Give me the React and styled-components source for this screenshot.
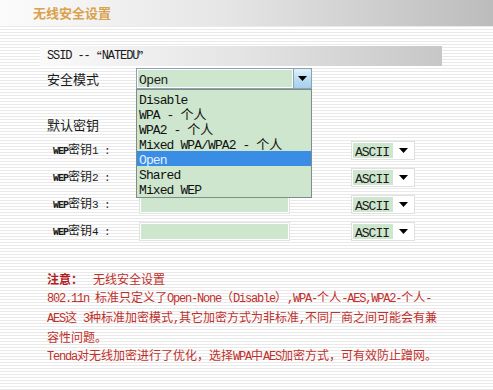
import React from "react";
import styled, { createGlobalStyle } from "styled-components";

const Global = createGlobalStyle`
  html, body { margin: 0; padding: 0; background: #fff; }
  body { font-family: "Noto Sans CJK SC", "Liberation Sans", sans-serif; }
`;

const Page = styled.div`
  width: 493px;
  height: 390px;
  overflow: hidden;
  background: repeating-linear-gradient(
    to bottom,
    #ffffff 0px,
    #ffffff 2px,
    #e9e9e9 2px,
    #e9e9e9 3px
  );
  color: #1a1a1a;
`;

const Header = styled.div`
  height: 26px;
  display: flex;
  align-items: center;
  padding-left: 33px;
  background: linear-gradient(to right, #fbfbfb 0%, #e6e6e6 45%, #bcbcbc 100%);
`;

const Title = styled.h1`
  margin: 0;
  font-size: 13px;
  font-weight: 700;
  line-height: 18px;
  color: #d9a24c;
`;

const Content = styled.div`
  padding: 20px 0 0 40px;
`;

const SsidBar = styled.div`
  width: 395px;
  height: 20px;
  padding-left: 7px;
  display: flex;
  align-items: center;
  font-size: 12px;
  background: linear-gradient(to right, #fafafa 0%, #e4e4e4 50%, #c7c7c7 100%);
`;

const Row = styled.div`
  display: flex;
  align-items: center;
  height: ${(p) => p.$h}px;
  margin-top: ${(p) => p.$mt || 0}px;
`;

const Label = styled.div`
  width: ${(p) => p.$w}px;
  padding-left: ${(p) => p.$pl}px;
  box-sizing: border-box;
  font-size: ${(p) => p.$fs || 13}px;
  line-height: 18px;
  white-space: nowrap;
  flex-shrink: 0;
`;

const Lat = styled.span`
  font-family: "Liberation Mono", monospace;
  font-size: ${(p) => p.$size}px;
  letter-spacing: ${(p) => p.$ls}px;
  font-weight: ${(p) => (p.$bold ? 700 : "inherit")};
`;

function Mixed({ text, size = 12, ls = -1.2, bold = false }) {
  const parts = text.split(/([\x20-\x7E]+)/).filter((s) => s.length);
  return parts.map((p, i) =>
    /^[\x20-\x7E]+$/.test(p) ? (
      <Lat key={i} $size={size} $ls={ls} $bold={bold}>
        {p}
      </Lat>
    ) : (
      <React.Fragment key={i}>{p}</React.Fragment>
    )
  );
}

const SelectWrap = styled.div`
  position: relative;
  width: 176px;
  height: 21px;
  box-sizing: border-box;
  border: 1px solid #8aa3b5;
  background: #fff;
  display: flex;
  padding: 1px 0 1px 1px;
`;

const SelectField = styled.div`
  flex: 1;
  background: #cde6cd;
  font-size: 13px;
  line-height: 17px;
  padding-left: 1px;
  margin-right: 1px;
`;

const ArrowBtn = styled.div`
  width: 19px;
  margin-top: -2px;
  margin-bottom: -2px;
  margin-right: -1px;
  box-sizing: border-box;
  border: 1px solid #8aa3b5;
  border-radius: 2px;
  background: linear-gradient(to bottom, #e2f1fb 0%, #b9dcf2 55%, #a6d0ee 100%);
  display: flex;
  align-items: center;
  justify-content: center;
`;

const Tri = styled.svg`
  display: block;
`;

const Dropdown = styled.ul`
  position: absolute;
  top: 20px;
  left: -1px;
  width: 176px;
  box-sizing: border-box;
  margin: 0;
  padding: 1px 0;
  list-style: none;
  background: #cde6cd;
  border: 1px solid #808c88;
  z-index: 5;
`;

const Option = styled.li`
  height: 15px;
  line-height: 15px;
  padding-left: 2px;
  font-size: 13px;
  white-space: nowrap;
  background: ${(p) => (p.$active ? "#3a8de4" : "transparent")};
  color: ${(p) => (p.$active ? "#e4f1ff" : "#111")};
`;

const KeyInput = styled.div`
  width: 151px;
  height: 19px;
  box-sizing: border-box;
  border: 1px solid #e2e2e2;
  box-shadow: inset 0 0 0 1px #ffffff;
  background: #cde6cd;
  flex-shrink: 0;
`;

const Spacer = styled.div`
  width: ${(p) => p.$w}px;
  flex-shrink: 0;
`;

const AsciiSelect = styled.div`
  width: 64px;
  height: 19px;
  box-sizing: border-box;
  border: 1px solid #e0e0e0;
  background: #fff;
  display: flex;
  align-items: stretch;
  padding: 1px 0 1px 1px;
`;

const AsciiField = styled.div`
  width: 40px;
  background: #cde6cd;
  font-size: 13px;
  line-height: 15px;
  padding-left: 2px;
  box-sizing: border-box;
`;

const AsciiArrow = styled.div`
  flex: 1;
  display: flex;
  align-items: center;
  justify-content: center;
`;

const Note = styled.div`
  margin-top: 25px;
  padding-left: 7px;
  color: #c0302a;
  font-size: 12px;
  line-height: 18px;
`;

const NoteLine = styled.div`
  white-space: nowrap;
`;

const NoteTitle = styled.span`
  font-weight: 700;
  color: #b21c1c;
  margin-right: 10px;
`;

const DownArrow = ({ w = 8, h = 4 }) => (
  <Tri width={w} height={h} viewBox={`0 0 ${w} ${h}`}>
    <polygon points={`0,0 ${w},0 ${w / 2},${h}`} fill="#000" />
  </Tri>
);

const options = [
  "Disable",
  "WPA - 个人",
  "WPA2 - 个人",
  "Mixed WPA/WPA2 - 个人",
  "Open",
  "Shared",
  "Mixed WEP",
];

const keys = [1, 2, 3, 4];

export default function App() {
  return (
    <Page>
      <Global />
      <Header>
        <Title>无线安全设置</Title>
      </Header>
      <Content>
        <SsidBar>
          <Mixed text="SSID -- “NATEDU”" size={12} ls={-1.1} />
        </SsidBar>
        <Row $h={21} $mt={2}>
          <Label $w={96} $pl={7}>安全模式</Label>
          <SelectWrap>
            <SelectField>
              <Mixed text="Open" size={13} ls={-0.6} />
            </SelectField>
            <ArrowBtn>
              <DownArrow w={9} h={5} />
            </ArrowBtn>
            <Dropdown>
              {options.map((o) => (
                <Option key={o} $active={o === "Open"}>
                  <Mixed text={o} size={13} ls={-0.9} />
                </Option>
              ))}
            </Dropdown>
          </SelectWrap>
        </Row>
        <Row $h={18} $mt={27}>
          <Label $w={96} $pl={7}>默认密钥</Label>
        </Row>
        <Spacer $w={1} style={{ height: 3 }} />
        {keys.map((k) => (
          <Row key={k} $h={27} $mt={k === 3 ? -0.5 : 0}>
            <Label $w={99} $pl={13} $fs={12}>
              <Mixed text="WEP" size={10} ls={-1} bold />
              密钥
              <Mixed text={`${k} :`} size={11} ls={-0.6} />
            </Label>
            <KeyInput />
            <Spacer $w={61} />
            <AsciiSelect>
              <AsciiField>
                <Mixed text="ASCII" size={13} ls={-1} />
              </AsciiField>
              <AsciiArrow>
                <DownArrow w={9} h={5} />
              </AsciiArrow>
            </AsciiSelect>
          </Row>
        ))}
        <Note>
          <NoteLine>
            <NoteTitle>注意：</NoteTitle>无线安全设置
          </NoteLine>
          <NoteLine>
            <Mixed text="802.11n 标准只定义了Open-None（Disable）,WPA-个人-AES,WPA2-个人-" />
          </NoteLine>
          <NoteLine>
            <Mixed text="AES这 3种标准加密模式,其它加密方式为非标准,不同厂商之间可能会有兼" />
          </NoteLine>
          <NoteLine>容性问题。</NoteLine>
          <NoteLine>
            <Mixed text="Tenda对无线加密进行了优化，选择WPA中AES加密方式，可有效防止蹭网。" />
          </NoteLine>
        </Note>
      </Content>
    </Page>
  );
}
